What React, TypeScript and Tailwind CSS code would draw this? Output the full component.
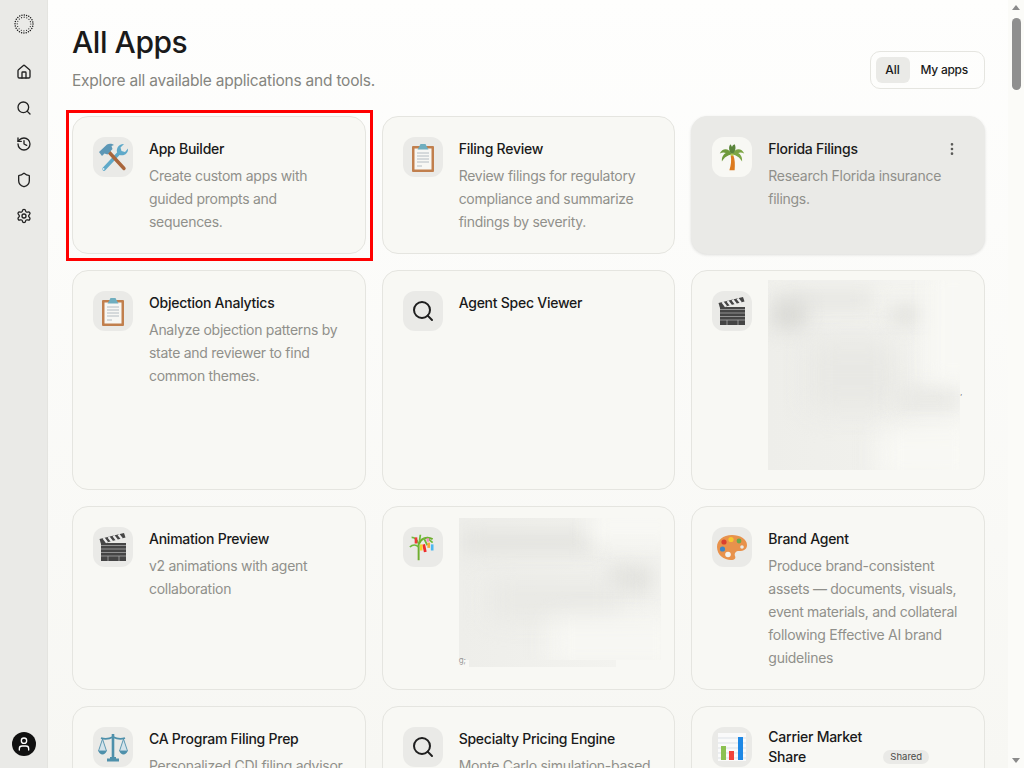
import { House, Search, History, Shield, Settings, EllipsisVertical, User } from 'lucide-react';
import type { ReactNode } from 'react';

const font = { fontFamily: 'Inter, sans-serif' };

function HammerWrench() {
  return (
    <svg viewBox="0 0 32 32" className="w-8 h-8">
      {/* wrench */}
      <path d="M7 28L22 12" stroke="#5fa9c9" strokeWidth="3.600" strokeLinecap="round" />
      <path d="M27 3l-3.500 3.500 1 3.500 3.500 1L31 7.500c.5 4.500-3.500 8-8.500 6.500L20 11c-1-4 2.500-8.500 7-8z" fill="#5fa9c9" />
      <circle cx="6.500" cy="28" r="1" fill="#dcecf3" />
      {/* hammer */}
      <path d="M10.500 9.500L27 27.500" stroke="#a9653b" strokeWidth="3.400" strokeLinecap="round" />
      <path d="M2 11L10 3.500c2-1 5-1 7 .5l-2.500 1 1 3-5 5.500-3-1-2.500 2.500z" fill="#5c97b6" />
    </svg>
  );
}

function Clipboard() {
  return (
    <svg viewBox="0 0 32 32" className="w-8 h-8">
      <rect x="5" y="5" width="22" height="26" rx="1" fill="#c17f4d" />
      <rect x="7.500" y="7.500" width="17" height="21" fill="#f7f7f4" />
      <path d="M12 6l1.500-3h5L20 6l1.500 2.500h-11z" fill="#6faebf" />
      <path d="M10 12h12M10 15h12M10 18h12M10 21h12M10 25h5" stroke="#b4bcc2" strokeWidth="1" />
    </svg>
  );
}

function Palm() {
  return (
    <svg viewBox="0 0 32 32" className="w-7 h-7">
      <path d="M14.500 14c1 6 .5 11-1.500 17h6c.5-6 .5-12-1.500-17z" fill="#dc7a1e" />
      <path d="M16 13C12 5 5 6 2 12c3-1.500 5-1.500 7-.5-3 1.500-5 5-4.500 9.500 3-5 6-7 11.500-8z" fill="#6f9a3c" />
      <path d="M16 13c4-8 11-7 14-1-3-1.500-5-1.500-7-.5 3 1.500 5 5 4.500 9.500-3-5-6-7-11.500-8z" fill="#7ba544" />
      <path d="M16 13c-4-4-4-8-2-11.500 1 1 1.500 2 2 3 .5-1.500 1.500-2.500 3-3 2 4 1 8.500-3 11.500z" fill="#59843a" />
      <circle cx="16" cy="13.500" r="1.500" fill="#b6c84a" />
    </svg>
  );
}

function Clapper() {
  return (
    <svg viewBox="0 0 32 32" className="w-8 h-8">
      <rect x="4" y="12" width="25" height="18" fill="#454545" />
      <path d="M4 14.500h25M4 18h25M4 21.500h25M4 25h25" stroke="#a6a6a6" strokeWidth=".8" />
      <path d="M11 25v5M22 25v5" stroke="#a6a6a6" strokeWidth=".8" />
      <path d="M2.500 8L27 2l1.500 4.500L4 13z" fill="#454545" />
      <path d="M6.500 7l3.500 4.500M11.500 6l3.500 4.500M16.500 4.800l3.500 4.500M21.500 3.500l3.500 4.500" stroke="#ececec" strokeWidth="2.200" />
    </svg>
  );
}

function Tanabata() {
  return (
    <svg viewBox="0 0 32 32" className="w-7 h-7">
      <path d="M11 31V13C13 7 20 3 27 7" stroke="#6fae2e" strokeWidth="2.200" fill="none" />
      <path d="M11 16C8 13 4 13 1 16M11 12C9 7 7 5 3 5M12 9l1-7M20 5l7 6M17 6l4 8" stroke="#6fbb3a" strokeWidth="2" fill="none" />
      <rect x="16" y="13" width="3.200" height="9" fill="#ef2b2b" transform="rotate(-12 17 17)" />
      <rect x="6.500" y="5" width="3" height="7" fill="#ef3838" />
      <rect x="12.500" y="13" width="3" height="7" fill="#f7d02f" />
      <rect x="25" y="13" width="3" height="7" fill="#4cb8f0" />
      <rect x="21" y="11" width="3" height="6" fill="#f9a63a" />
      <rect x="20" y="6" width="3" height="4" fill="#f28ec0" />
    </svg>
  );
}

function Palette() {
  return (
    <svg viewBox="0 0 32 32" className="w-8 h-8">
      <path d="M16 4C7 4 1 9 1 16c0 8 7 13 14 13 4 0 5-2 4-4-1-3 1-5 4-5 5 0 8-2 8-6C31 8 24 4 16 4z" fill="#e8924c" />
      <circle cx="8" cy="11" r="2.600" fill="#d8402f" />
      <circle cx="15" cy="8.500" r="2.600" fill="#f5c92f" />
      <circle cx="23" cy="10" r="2.400" fill="#6aa84f" />
      <circle cx="6.500" cy="18" r="2.600" fill="#3d86c6" />
      <circle cx="12" cy="23.500" r="2.800" fill="#f3f3f0" />
      <circle cx="26" cy="16" r="1.800" fill="#eaeae7" />
    </svg>
  );
}

function Scales() {
  return (
    <svg viewBox="0 0 32 32" className="w-8 h-8" fill="none" stroke="#4e90ab" strokeWidth="1.200">
      <path d="M16 3v23" strokeWidth="2.600" />
      <path d="M4 7c4 1.500 8 1 12-1 4 2 8 2.500 12 1" strokeWidth="1.800" />
      <path d="M10 29h12" strokeWidth="3" />
      <path d="M13 27h6" strokeWidth="2" />
      <path d="M5.500 8L1.500 20h8zM26.500 8l-4 12h8z" fill="#d3e3ea" strokeWidth=".9" />
      <path d="M1.500 20c1 4.500 7 4.500 8 0zM22.500 20c1 4.500 7 4.500 8 0z" fill="#4e90ab" stroke="none" />
    </svg>
  );
}

function BarChart() {
  return (
    <svg viewBox="0 0 32 32" className="w-8 h-8">
      <rect x="2" y="2" width="28" height="28" fill="#fafafa" />
      <path d="M2 7h28M2 12h28M2 17h28M2 22h28M2 27h28" stroke="#cfd6de" strokeWidth=".7" />
      <rect x="5" y="15" width="5" height="14" fill="#8cc152" />
      <rect x="13" y="20" width="5" height="9" fill="#f0433a" />
      <rect x="22" y="6" width="5" height="23" fill="#1e88e5" />
    </svg>
  );
}

function SearchTile() {
  return <Search className="w-6 h-6 text-[#1f1f1f]" strokeWidth={2} />;
}

// the redacted descriptions in the reference
function Redacted({ variant }: { variant: 'a' | 'b' }) {
  if (variant === 'a') {
    return (
      <>
        <div className="absolute left-0 -top-[11px] w-[192px] h-[190px] overflow-hidden bg-gradient-to-r from-[#eeeeea] via-[#f0f0ec] to-[#f7f7f3]">
          <div className="absolute left-[-4px] top-[-2px] w-[190px] h-[40px] bg-[#f4f4f0] blur-[10px]" />
          <div className="absolute left-[6px] top-[12px] w-[100px] h-[16px] bg-[#e2e2de] blur-[10px]" />
          <div className="absolute left-[4px] top-[22px] w-[34px] h-[26px] bg-[#d8d8d4] blur-[10px]" />
          <div className="absolute left-[122px] top-[24px] w-[30px] h-[22px] bg-[#e4e4e0] blur-[9px]" />
          <div className="absolute left-[40px] top-[60px] w-[90px] h-[70px] bg-[#e8e8e4] blur-[14px]" />
          <div className="absolute left-[128px] top-[108px] w-[64px] h-[22px] bg-[#e7e7e3] blur-[10px]" />
          <div className="absolute left-[160px] top-[-10px] w-[50px] h-[110px] bg-[#f8f8f4] blur-[10px]" />
          <div className="absolute left-[110px] top-[150px] w-[100px] h-[50px] bg-[#f8f8f4] blur-[12px]" />
        </div>
        <span className="absolute left-[192px] top-[98px] text-[7px] leading-[8px] text-[#666]">,</span>
      </>
    );
  }
  return (
    <div className="absolute left-0 -top-[9px] w-[202px] h-[149px]">
      <div className="absolute inset-0 bottom-[7px] overflow-hidden bg-gradient-to-r from-[#eeeeea] to-[#f3f3ef]">
        <div className="absolute left-[4px] top-[14px] w-[130px] h-[20px] bg-[#e2e2de] blur-[10px]" />
        <div className="absolute left-[150px] top-[48px] w-[44px] h-[26px] bg-[#e1e1dd] blur-[10px]" />
        <div className="absolute left-[30px] top-[62px] w-[130px] h-[40px] bg-[#e9e9e5] blur-[12px]" />
        <div className="absolute left-[130px] top-[-10px] w-[90px] h-[34px] bg-[#f8f8f4] blur-[10px]" />
        <div className="absolute left-[90px] top-[100px] w-[130px] h-[50px] bg-[#f7f7f3] blur-[12px]" />
      </div>
      <div className="absolute left-[10px] top-[142px] w-[147px] h-[7px] bg-gradient-to-r from-[#eeeeea] to-[#f3f3ef]" />
      <span className="absolute left-0 top-[138px] text-[8px] leading-[9px] text-[#999]">g;</span>
    </div>
  );
}

interface App {
  name: ReactNode;
  desc?: ReactNode;
  icon: ReactNode;
  redacted?: 'a' | 'b';
  hovered?: boolean;
  selected?: boolean;
  shared?: boolean;
}

const APPS: App[] = [
  { name: 'App Builder', desc: 'Create custom apps with guided prompts and sequences.', icon: <HammerWrench />, selected: true },
  { name: 'Filing Review', desc: 'Review filings for regulatory compliance and summarize findings by severity.', icon: <Clipboard /> },
  { name: 'Florida Filings', desc: 'Research Florida insurance filings.', icon: <Palm />, hovered: true },
  { name: 'Objection Analytics', desc: 'Analyze objection patterns by state and reviewer to find common themes.', icon: <Clipboard /> },
  { name: 'Agent Spec Viewer', icon: <SearchTile /> },
  { name: '', icon: <Clapper />, redacted: 'a' },
  { name: 'Animation Preview', desc: 'v2 animations with agent collaboration', icon: <Clapper /> },
  { name: '', icon: <Tanabata />, redacted: 'b' },
  { name: 'Brand Agent', desc: 'Produce brand-consistent assets — documents, visuals, event materials, and collateral following Effective AI brand guidelines', icon: <Palette /> },
  { name: 'CA Program Filing Prep', desc: 'Personalized CDI filing advisor', icon: <Scales /> },
  { name: 'Specialty Pricing Engine', desc: 'Monte Carlo simulation-based', icon: <SearchTile /> },
  { name: 'Carrier Market Share', icon: <BarChart />, shared: true },
];

function AppCard({ app }: { app: App }) {
  return (
    <div
      className={`relative rounded-2xl p-5 border flex gap-4 ${
        app.hovered
          ? 'bg-[#eaeae7] border-[#eaeae7] shadow-[0_1px_3px_rgba(0,0,0,0.12)]'
          : 'bg-[#f8f8f4] border-[#e5e5e0]'
      }`}
    >
      <div
        className={`w-10 h-10 shrink-0 rounded-xl flex items-center justify-center ${
          app.hovered ? 'bg-[#f8f8f4]' : 'bg-[#eaeae7]'
        }`}
      >
        {app.icon}
      </div>
      <div className={`relative min-w-0 flex-1 ${app.redacted === 'a' ? 'h-[178px]' : ''}`}>
        {app.redacted && <Redacted variant={app.redacted} />}
        {app.name && (
          <div
            className={`text-[14px] font-medium tracking-[-0.25px] text-[#1a1a1a] ${
              app.shared ? 'w-[110px] leading-5' : 'leading-6'
            }`}
          >
            {app.name}
          </div>
        )}
        {app.desc && (
          <p className="mt-[3px] text-[14px] leading-[23px] tracking-[-0.28px] text-[#90908b]">{app.desc}</p>
        )}
        {app.shared && (
          <span className="absolute left-[115px] top-[23px] px-[7px] py-[1px] rounded-full bg-[#eaeae7] text-[9.500px] leading-[12px] text-[#4a4a48]">
            Shared
          </span>
        )}
      </div>
      {app.hovered && (
        <EllipsisVertical className="absolute top-[24px] right-[24px] w-4 h-4 text-[#5a5a58]" />
      )}
      {app.selected && (
        <div className="absolute -left-[7px] -top-[7px] -right-[8px] -bottom-[8px] border-[3px] border-[#ff0000] pointer-events-none" />
      )}
    </div>
  );
}

function Logo() {
  return (
    <svg viewBox="0 0 20 20" className="w-5 h-5" fill="none" stroke="#1a1a1a" strokeLinecap="round">
      <circle cx="10" cy="10" r="9" strokeWidth="1.500" strokeDasharray="0 2.356" />
      <circle cx="10" cy="10" r="6.800" strokeWidth="1.200" strokeDasharray="0 2.670" />
    </svg>
  );
}

export default function AllApps() {
  return (
    <div className="h-screen w-full flex overflow-hidden text-[#1a1a1a]" style={font}>
      {/* sidebar */}
      <aside className="w-12 shrink-0 bg-[#eaeae7] border-r border-[#e4e4e0] flex flex-col items-center pt-[14px] pb-3">
        <Logo />
        <nav className="mt-[30px] flex flex-col items-center gap-5 text-[#222]">
          <House className="w-4 h-4" />
          <Search className="w-4 h-4" />
          <History className="w-4 h-4" />
          <Shield className="w-4 h-4" />
          <Settings className="w-4 h-4" />
        </nav>
        <div className="mt-auto w-6 h-6 rounded-full bg-[#111] flex items-center justify-center">
          <User className="w-4 h-4 text-white" />
        </div>
      </aside>

      {/* main */}
      <main className="flex-1 min-w-0 overflow-hidden bg-gradient-to-b from-[#fefefd] to-[#f7f7f3] pl-6 pr-[23px] pt-[22px]">
        <div className="flex items-start justify-between h-[94px]">
          <div>
            <h1 className="text-[30px] leading-10 font-medium tracking-[-0.45px] text-[#1a1a1a]">All Apps</h1>
            <p className="mt-[7px] text-[15.500px] leading-6 tracking-[-0.22px] text-[#85857f]">
              Explore all available applications and tools.
            </p>
          </div>
          <div className="mt-[29px] flex items-center p-[5px] rounded-[10px] border border-[#e5e5e0]">
            <span className="w-[34px] h-[26px] flex items-center justify-center rounded-md bg-[#eaeae7] text-[12px] font-medium tracking-[-0.1px]">
              All
            </span>
            <span className="px-[11px] h-[26px] flex items-center text-[12px] font-medium tracking-[-0.25px]">My apps</span>
          </div>
        </div>
        <div className="grid grid-cols-3 gap-x-4 gap-y-4">
          {APPS.map((app, i) => (
            <AppCard key={i} app={app} />
          ))}
        </div>
      </main>

      {/* scrollbar */}
      <div className="w-4 shrink-0 bg-[#fbfbf8] flex flex-col items-center justify-between py-[5px]">
        <div className="flex flex-col items-center w-full">
          <div className="w-0 h-0 border-x-[4px] border-x-transparent border-b-[5px] border-b-[#8a8a8a]" />
          <div className="mt-[8px] w-[9px] h-[72px] rounded-full bg-[#8f8f8f]" />
        </div>
        <div className="w-0 h-0 border-x-[4px] border-x-transparent border-t-[5px] border-t-[#8a8a8a]" />
      </div>
    </div>
  );
}
